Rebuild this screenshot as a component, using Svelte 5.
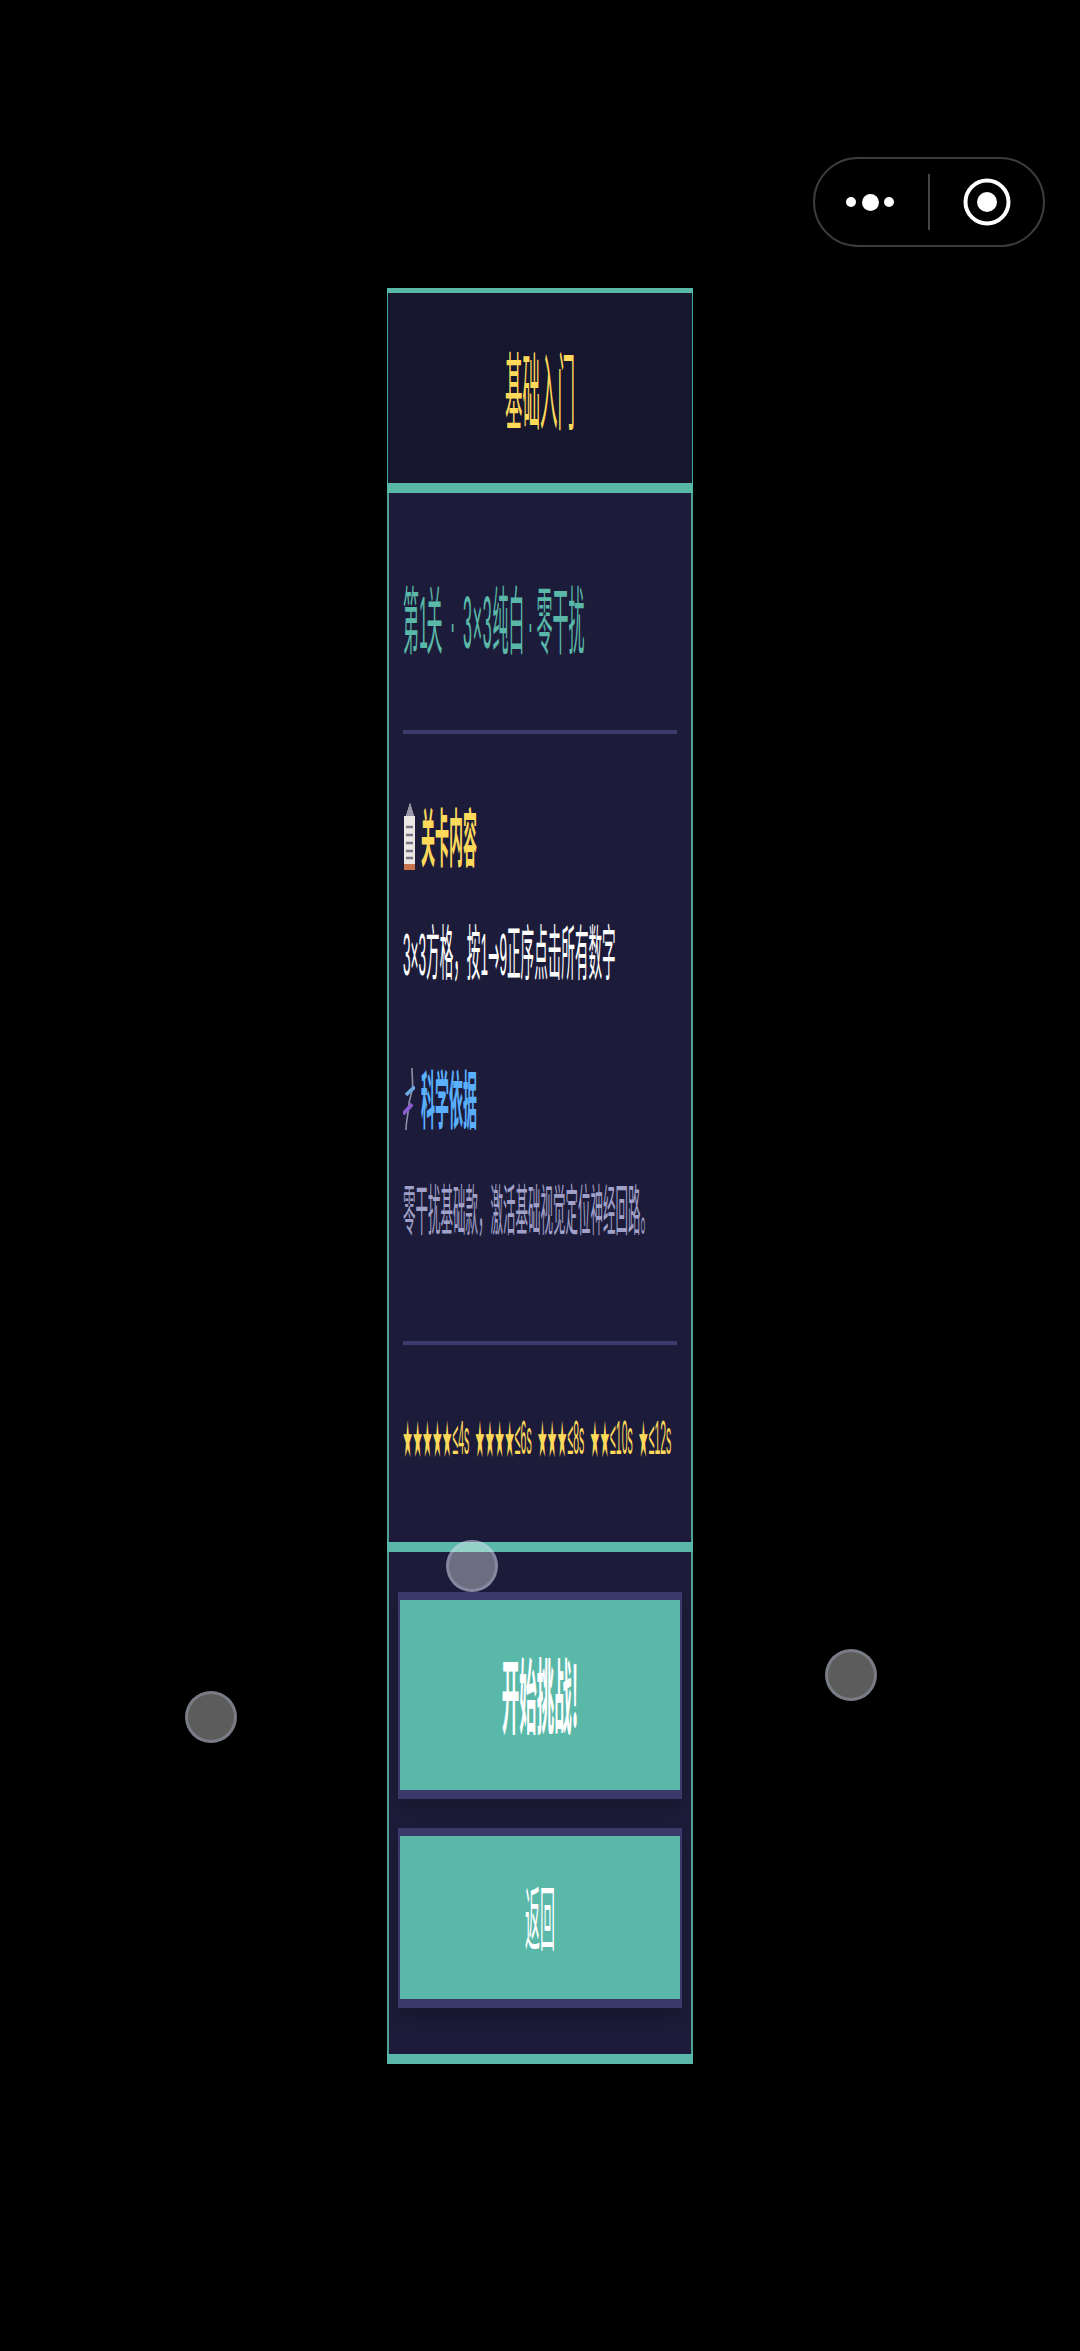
<script>
  const touches = [
    { x: 472, y: 1566 },
    { x: 211, y: 1717 },
    { x: 851, y: 1675 }
  ];
  const ratings = [
    { stars: '★★★★★', time: '≤4s' },
    { stars: '★★★★', time: '≤6s' },
    { stars: '★★★', time: '≤8s' },
    { stars: '★★', time: '≤10s' },
    { stars: '★', time: '≤12s' }
  ];
</script>

<div class="page">
  <div class="capsule">
    <div class="dots"><i class="dot"></i><i class="dot big"></i><i class="dot"></i></div>
    <i class="sep"></i>
    <svg class="target" viewBox="0 0 50 50" width="50" height="50">
      <circle cx="25" cy="25" r="21.5" fill="none" stroke="#fff" stroke-width="4" />
      <circle cx="25" cy="25" r="10" fill="#fff" />
    </svg>
  </div>

  <div class="card">
    <header class="head"><span class="txt title">基础入门</span></header>
    <div class="bar"></div>
    <section class="content">
      <div class="row level"><span class="txt">第<b class="one">1</b>关<b class="mid">·</b><b class="lat">3×3</b>纯白<b class="dotc">·</b>零干扰</span></div>
      <div class="rule r1"></div>
      <div class="row sec s1">
        <svg class="ico" viewBox="0 0 12 67" preserveAspectRatio="none">
          <path d="M7 0 L11 13 H12 V61 H1 V13 H3 Z" fill="#ece6e4" />
          <path d="M7 0 L11 13 H3 Z" fill="#9a98a8" />
          <path d="M1 61 H12 V67 H1 Z" fill="#c8744a" />
          <path d="M3 24 H10 M3 32 H10 M3 40 H10 M3 48 H10 M3 55 H10" stroke="#77778a" stroke-width="2.4" />
        </svg>
        <span class="txt yellow">关卡内容</span>
      </div>
      <div class="row body"><span class="txt"><b class="lat">3×3</b>方格，按<b class="lat">1</b><b class="arr">→</b><b class="lat">9</b>正序点击所有数字</span></div>
      <div class="row sec s2">
        <svg class="ico" viewBox="0 0 12 62" preserveAspectRatio="none">
          <path d="M9 0 C9 8 10 14 9.5 20 C9 26 6 30 5.5 40 C5 48 3 54 3 62" fill="none" stroke="#8e8ea8" stroke-width="1.6" />
          <path d="M3 27 C6 24 8 22 12 19" fill="none" stroke="#6aa8e0" stroke-width="3.6" />
          <path d="M0 46 C3 43 6 40 9 36" fill="none" stroke="#8a5cd0" stroke-width="3.8" />
        </svg>
        <span class="txt blue">科学依据</span>
      </div>
      <div class="row desc"><span class="txt">零干扰基础款，激活基础视觉定位神经回路。</span></div>
      <div class="rule r2"></div>
      <div class="row stars">
        {#each ratings as r}
          <span class="txt rate"><span class="st">{r.stars}</span><span class="tm">{r.time}</span></span>
        {/each}
      </div>
    </section>
    <div class="bar"></div>
    <section class="actions">
      <button class="btn start"><span class="txt">开始挑战!</span></button>
      <button class="btn back"><span class="txt">返回</span></button>
    </section>
  </div>

  {#each touches as t}
    <i class="touch" style="left:{t.x}px;top:{t.y}px"></i>
  {/each}
</div>

<style>
  :global(body) { margin: 0; background: #000; }
  .page {
    position: relative;
    width: 1080px;
    height: 2351px;
    box-sizing: border-box;
    padding-top: 157px;
    background: #000;
    overflow: hidden;
    font-family: "Noto Sans CJK SC", "Liberation Sans", sans-serif;
  }
  .capsule {
    width: 232px;
    height: 90px;
    margin-left: 813px;
    box-sizing: border-box;
    border: 2px solid #3c3c3c;
    border-radius: 45px;
    display: flex;
    align-items: center;
  }
  .dots { display: flex; align-items: center; gap: 5.5px; margin-left: 31px; }
  .dot { display: block; width: 10px; height: 10px; border-radius: 50%; background: #fff; }
  .dot.big { width: 17px; height: 17px; }
  .sep { display: block; width: 2px; height: 56px; background: #444; margin-left: 34px; }
  .target { margin-left: 32px; }

  .card {
    width: 306px;
    margin: 41px auto 0;
    box-sizing: border-box;
    border-top: 5px solid #5ab8a9;
    border-bottom: 10px solid #5ab8a9;
    background: #1c1c3a;
  }
  .txt {
    display: inline-block;
    white-space: nowrap;
    transform: scaleY(4.4);
    transform-origin: 50% 54%;
  }
  .txt b { font-weight: inherit; }
  .lat { font-family: "Liberation Sans", sans-serif; }
  .arr { font-family: "DejaVu Sans", sans-serif; }
  .head {
    height: 190px;
    box-sizing: border-box;
    border: solid #4fa396;
    border-width: 0 1.5px;
    background: #16162e;
    display: flex;
    align-items: center;
    justify-content: center;
    color: #ffd95a;
    font-size: 17.5px;
  }
  .title { transform: translateY(2px) scaleY(4.8); }
  .bar { height: 10px; background: #5ab8a9; }
  .content {
    height: 1049px;
    padding: 0 14px;
    box-sizing: border-box;
    border: solid #4fa396;
    border-width: 0 2px;
    overflow: hidden;
  }
  .row { display: flex; align-items: center; }
  .level { height: 74px; margin-top: 90px; color: #5ab8a9; font-size: 16px; }
  .level .txt { transform: translateY(-1px) scaleY(4.6); }
  .level .one { font-family: "Liberation Sans", sans-serif; letter-spacing: -1.5px; }
  .level .lat { letter-spacing: .8px; }
  .level .mid { display: inline-block; width: 20.5px; text-align: center; font-family: "Liberation Sans", sans-serif; }
  .level .dotc { display: inline-block; width: 12px; text-align: center; font-family: "Liberation Sans", sans-serif; }
  .rule { height: 4px; background: #3c3b6e; }
  .r1 { margin-top: 73px; }
  .r2 { margin-top: 106px; }
  .sec { gap: 6px; font-weight: 700; font-size: 14px; }
  .sec .txt { transform: scaleY(4.5); }
  .s1 { height: 67px; margin-top: 69px; }
  .s2 { height: 62px; margin-top: 88px; }
  .ico { display: block; width: 12px; height: 100%; }
  .yellow { color: #ffd95a; }
  .blue { color: #5ab0ff; }
  .body { height: 55px; margin-top: 55px; color: #fff; font-size: 13.6px; }
  .body .txt { transform: translateY(-2px) scaleY(4.4); }
  .desc { height: 53px; margin-top: 52px; color: #a0a0c8; font-size: 12.5px; }
  .stars {
    height: 36px;
    margin-top: 72px;
    gap: 6px;
    color: #ffd95a;
  }
  .rate { transform: translateY(-9px) scaleY(4.5); }
  .st { font-size: 9.2px; letter-spacing: .7px; }
  .tm { font-size: 10.5px; font-family: "Liberation Sans", sans-serif; }

  .actions { height: 502px; padding: 40px 9px 0; box-sizing: border-box; border: solid #4fa396; border-width: 0 2px; }
  .btn {
    display: flex;
    align-items: center;
    justify-content: center;
    width: 100%;
    box-sizing: border-box;
    padding: 0;
    border: solid #3a3a6a;
    border-width: 8px 2px 9px;
    background: #5ab8a9;
    color: #fff;
    font-family: inherit;
    box-shadow: 0 12px 16px rgba(0, 0, 0, .18);
  }
  .start { height: 207px; font-size: 17.5px; font-weight: 700; }
  .back { height: 180px; margin-top: 29px; font-size: 15px; }
  .btn .txt { transform: scaleY(4.7); }

  .touch {
    position: absolute;
    width: 52px;
    height: 52px;
    margin: -26px 0 0 -26px;
    box-sizing: border-box;
    border-radius: 50%;
    background: rgba(255, 255, 255, .36);
    border: 3px solid rgba(190, 200, 235, .3);
  }
</style>
